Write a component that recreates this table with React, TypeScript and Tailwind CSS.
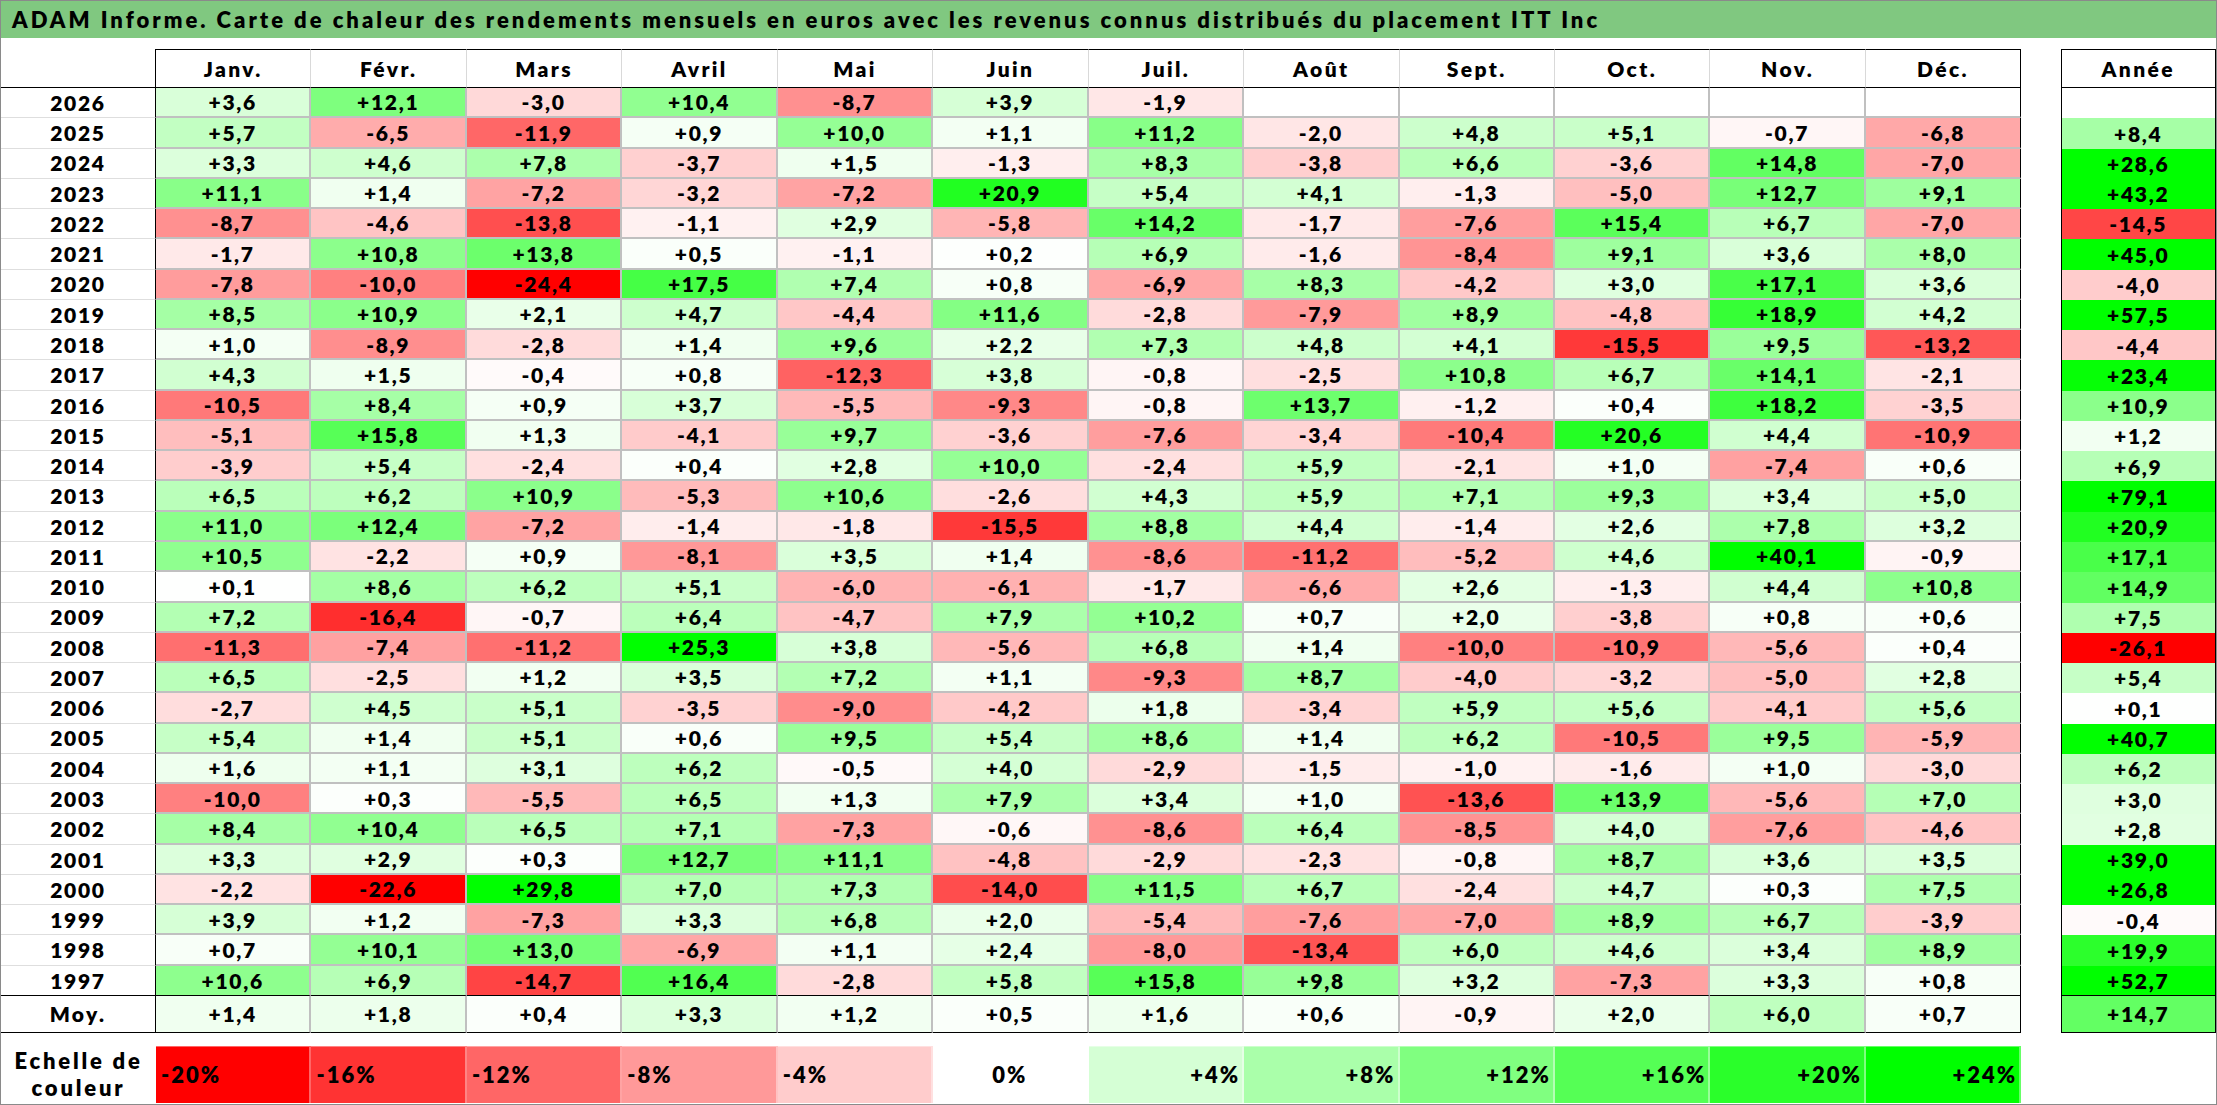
import clsx from 'clsx';

const MONTHS = ['Janv.', 'Févr.', 'Mars', 'Avril', 'Mai', 'Juin', 'Juil.', 'Août', 'Sept.', 'Oct.', 'Nov.', 'Déc.'];

// year, 12 monthly values, yearly total
const ROWS: [string, string, string][] = [
  ['2026', '+3,6 +12,1 -3,0 +10,4 -8,7 +3,9 -1,9 . . . . .', '.'],
  ['2025', '+5,7 -6,5 -11,9 +0,9 +10,0 +1,1 +11,2 -2,0 +4,8 +5,1 -0,7 -6,8', '+8,4'],
  ['2024', '+3,3 +4,6 +7,8 -3,7 +1,5 -1,3 +8,3 -3,8 +6,6 -3,6 +14,8 -7,0', '+28,6'],
  ['2023', '+11,1 +1,4 -7,2 -3,2 -7,2 +20,9 +5,4 +4,1 -1,3 -5,0 +12,7 +9,1', '+43,2'],
  ['2022', '-8,7 -4,6 -13,8 -1,1 +2,9 -5,8 +14,2 -1,7 -7,6 +15,4 +6,7 -7,0', '-14,5'],
  ['2021', '-1,7 +10,8 +13,8 +0,5 -1,1 +0,2 +6,9 -1,6 -8,4 +9,1 +3,6 +8,0', '+45,0'],
  ['2020', '-7,8 -10,0 -24,4 +17,5 +7,4 +0,8 -6,9 +8,3 -4,2 +3,0 +17,1 +3,6', '-4,0'],
  ['2019', '+8,5 +10,9 +2,1 +4,7 -4,4 +11,6 -2,8 -7,9 +8,9 -4,8 +18,9 +4,2', '+57,5'],
  ['2018', '+1,0 -8,9 -2,8 +1,4 +9,6 +2,2 +7,3 +4,8 +4,1 -15,5 +9,5 -13,2', '-4,4'],
  ['2017', '+4,3 +1,5 -0,4 +0,8 -12,3 +3,8 -0,8 -2,5 +10,8 +6,7 +14,1 -2,1', '+23,4'],
  ['2016', '-10,5 +8,4 +0,9 +3,7 -5,5 -9,3 -0,8 +13,7 -1,2 +0,4 +18,2 -3,5', '+10,9'],
  ['2015', '-5,1 +15,8 +1,3 -4,1 +9,7 -3,6 -7,6 -3,4 -10,4 +20,6 +4,4 -10,9', '+1,2'],
  ['2014', '-3,9 +5,4 -2,4 +0,4 +2,8 +10,0 -2,4 +5,9 -2,1 +1,0 -7,4 +0,6', '+6,9'],
  ['2013', '+6,5 +6,2 +10,9 -5,3 +10,6 -2,6 +4,3 +5,9 +7,1 +9,3 +3,4 +5,0', '+79,1'],
  ['2012', '+11,0 +12,4 -7,2 -1,4 -1,8 -15,5 +8,8 +4,4 -1,4 +2,6 +7,8 +3,2', '+20,9'],
  ['2011', '+10,5 -2,2 +0,9 -8,1 +3,5 +1,4 -8,6 -11,2 -5,2 +4,6 +40,1 -0,9', '+17,1'],
  ['2010', '+0,1 +8,6 +6,2 +5,1 -6,0 -6,1 -1,7 -6,6 +2,6 -1,3 +4,4 +10,8', '+14,9'],
  ['2009', '+7,2 -16,4 -0,7 +6,4 -4,7 +7,9 +10,2 +0,7 +2,0 -3,8 +0,8 +0,6', '+7,5'],
  ['2008', '-11,3 -7,4 -11,2 +25,3 +3,8 -5,6 +6,8 +1,4 -10,0 -10,9 -5,6 +0,4', '-26,1'],
  ['2007', '+6,5 -2,5 +1,2 +3,5 +7,2 +1,1 -9,3 +8,7 -4,0 -3,2 -5,0 +2,8', '+5,4'],
  ['2006', '-2,7 +4,5 +5,1 -3,5 -9,0 -4,2 +1,8 -3,4 +5,9 +5,6 -4,1 +5,6', '+0,1'],
  ['2005', '+5,4 +1,4 +5,1 +0,6 +9,5 +5,4 +8,6 +1,4 +6,2 -10,5 +9,5 -5,9', '+40,7'],
  ['2004', '+1,6 +1,1 +3,1 +6,2 -0,5 +4,0 -2,9 -1,5 -1,0 -1,6 +1,0 -3,0', '+6,2'],
  ['2003', '-10,0 +0,3 -5,5 +6,5 +1,3 +7,9 +3,4 +1,0 -13,6 +13,9 -5,6 +7,0', '+3,0'],
  ['2002', '+8,4 +10,4 +6,5 +7,1 -7,3 -0,6 -8,6 +6,4 -8,5 +4,0 -7,6 -4,6', '+2,8'],
  ['2001', '+3,3 +2,9 +0,3 +12,7 +11,1 -4,8 -2,9 -2,3 -0,8 +8,7 +3,6 +3,5', '+39,0'],
  ['2000', '-2,2 -22,6 +29,8 +7,0 +7,3 -14,0 +11,5 +6,7 -2,4 +4,7 +0,3 +7,5', '+26,8'],
  ['1999', '+3,9 +1,2 -7,3 +3,3 +6,8 +2,0 -5,4 -7,6 -7,0 +8,9 +6,7 -3,9', '-0,4'],
  ['1998', '+0,7 +10,1 +13,0 -6,9 +1,1 +2,4 -8,0 -13,4 +6,0 +4,6 +3,4 +8,9', '+19,9'],
  ['1997', '+10,6 +6,9 -14,7 +16,4 -2,8 +5,8 +15,8 +9,8 +3,2 -7,3 +3,3 +0,8', '+52,7'],
];

const AVG = '+1,4 +1,8 +0,4 +3,3 +1,2 +0,5 +1,6 +0,6 -0,9 +2,0 +6,0 +0,7'.split(' ');
const AVG_YEAR = '+14,7';

const SCALE = ['-20%', '-16%', '-12%', '-8%', '-4%', '0%', '+4%', '+8%', '+12%', '+16%', '+20%', '+24%'];

// red down to -20, green up to +24, white at 0
function heat(text: string) {
  if (text === '.') return '#ffffff';
  const v = parseFloat(text.replace(',', '.').replace('%', ''));
  if (v >= 0) {
    const c = Math.round(255 * (1 - Math.min(v / 24, 1)));
    return `rgb(${c},255,${c})`;
  }
  const c = Math.round(255 * (1 - Math.min(-v / 20, 1)));
  return `rgb(255,${c},${c})`;
}

function MonthCell({ value, col, lastRow }: { value: string; col: number; lastRow: boolean }) {
  return (
    <div
      className={clsx(
        'w-[155.45px] shrink-0 flex items-center justify-center',
        col === 11 ? 'border-r border-r-black' : 'border-r-2 border-r-[#c0c0c0]',
        lastRow ? 'border-b border-b-black' : 'border-b-2 border-b-[#c0c0c0]'
      )}
      style={{ backgroundColor: heat(value) }}
    >
      {value === '.' ? '' : value}
    </div>
  );
}

export default function App() {
  return (
    <div className="w-[2217px] h-[1105px] border border-[#8a8a8a] bg-white flex flex-col text-black font-extrabold text-[21px] tracking-[1.7px] font-['Lato',_'Liberation_Sans',_sans-serif]">
      {/* Title */}
      <div className="h-[37px] shrink-0 bg-[#80c880] flex items-center px-[11px] text-[22px] tracking-[3px] whitespace-nowrap">
        ADAM Informe. Carte de chaleur des rendements mensuels en euros avec les revenus connus distribués du placement ITT Inc
      </div>

      <div className="mt-[11px] flex">
        {/* Main table */}
        <div className="flex flex-col">
          <div className="h-[39px] flex">
            <div className="w-[155px] shrink-0 border-r border-b border-black" />
            {MONTHS.map((m, i) => (
              <div
                key={m}
                className={clsx(
                  'w-[155.45px] shrink-0 flex items-center justify-center border-t border-b border-black tracking-[2.4px]',
                  i === 11 ? 'border-r border-r-black' : 'border-r border-r-[#d9d9d9]'
                )}
              >
                {m}
              </div>
            ))}
          </div>

          {ROWS.map(([year, months], r) => {
            const lastRow = r === ROWS.length - 1;
            return (
              <div key={year} className="h-[30.27px] flex">
                <div
                  className={clsx(
                    'w-[155px] shrink-0 flex items-center justify-center border-r border-r-black',
                    lastRow ? 'border-b border-b-black' : 'border-b border-b-[#dedede]'
                  )}
                >
                  {year}
                </div>
                {months.split(' ').map((v, i) => (
                  <MonthCell key={i} value={v} col={i} lastRow={lastRow} />
                ))}
              </div>
            );
          })}

          <div className="h-[37px] flex">
            <div className="w-[155px] shrink-0 flex items-center justify-center border-r border-b border-black tracking-[2.4px]">Moy.</div>
            {AVG.map((v, i) => (
              <div
                key={i}
                className={clsx(
                  'w-[155.45px] shrink-0 flex items-center justify-center border-b border-b-black',
                  i === 11 ? 'border-r border-r-black' : 'border-r-2 border-r-[#c0c0c0]'
                )}
                style={{ backgroundColor: heat(v) }}
              >
                {v}
              </div>
            ))}
          </div>
        </div>

        <div className="w-[39.5px] shrink-0" />

        {/* Year column */}
        <div className="w-[155px] shrink-0 flex flex-col border-l border-r border-black">
          <div className="h-[39px] flex items-center justify-center border-t border-b border-black tracking-[2.4px]">Année</div>
          {ROWS.map(([year, , total], r) => (
            <div
              key={year}
              className={clsx(
                'h-[30.27px] flex items-center justify-center',
                r === ROWS.length - 1 && 'border-b border-b-black'
              )}
              style={{ backgroundColor: heat(total) }}
            >
              {total === '.' ? '' : total}
            </div>
          ))}
          <div className="h-[37px] flex items-center justify-center border-b border-black" style={{ backgroundColor: heat(AVG_YEAR) }}>
            {AVG_YEAR}
          </div>
        </div>
      </div>

      {/* Colour scale */}
      <div className="mt-[13px] h-[57px] flex text-[22px] tracking-[2px]">
        <div className="w-[155px] shrink-0 flex flex-col items-center justify-center leading-[27px] tracking-[2.8px]">
          <span>Echelle de</span>
          <span>couleur</span>
        </div>
        {SCALE.map((s, i) => (
          <div
            key={s}
            className={clsx(
              'w-[155.45px] shrink-0 flex items-center border-t border-t-white/40 border-r-2 border-r-white/40',
              i < 5 && 'justify-start pl-[5px]',
              i === 5 && 'justify-center',
              i > 5 && 'justify-end pr-[2px]'
            )}
            style={{ backgroundColor: heat(s) }}
          >
            {s}
          </div>
        ))}
      </div>
    </div>
  );
}
